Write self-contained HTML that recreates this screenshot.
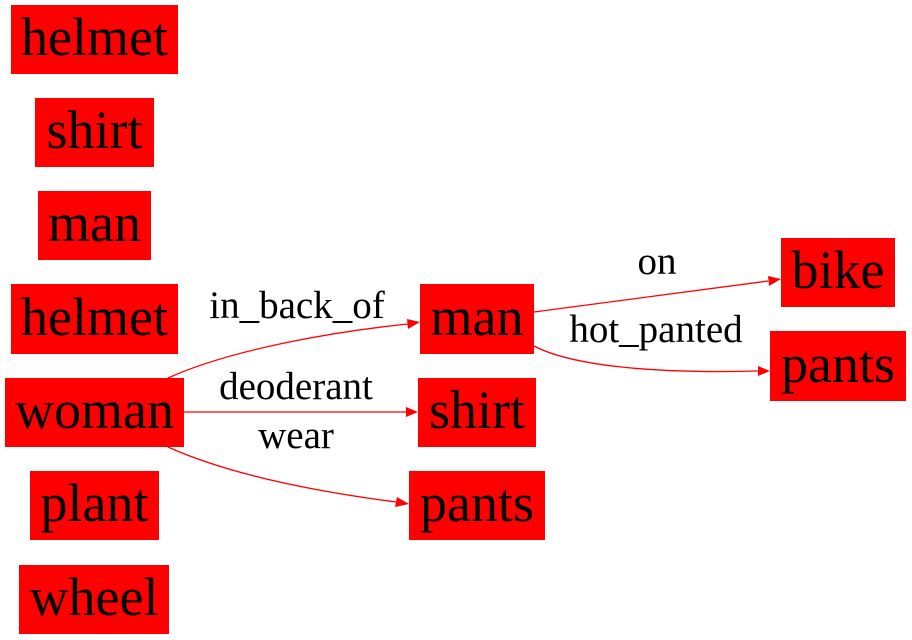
<!DOCTYPE html>
<html><head><meta charset="utf-8"><style>html,body{margin:0;padding:0;background:#fff}svg{display:block}</style></head>
<body>
<svg width="912" height="640" viewBox="0 0 912 640" xmlns="http://www.w3.org/2000/svg" font-family="Liberation Serif, serif">
<g fill="#ff0000">
<rect x="11" y="5" width="167" height="69"/>
<rect x="35" y="98" width="119" height="69"/>
<rect x="38" y="191" width="113" height="69"/>
<rect x="11" y="284" width="167" height="70"/>
<rect x="5" y="378" width="179" height="69"/>
<rect x="30" y="471" width="129" height="69"/>
<rect x="19" y="565" width="150" height="69"/>
<rect x="420" y="284" width="114" height="70"/>
<rect x="418" y="378" width="118" height="69"/>
<rect x="409" y="471" width="136" height="69"/>
<rect x="781" y="238" width="114" height="69"/>
<rect x="770" y="331" width="136" height="70"/>
</g>
<g font-size="54" text-anchor="middle" fill="#000">
<text x="94.5" y="55">helmet</text>
<text x="94.5" y="148">shirt</text>
<text x="94.5" y="241">man</text>
<text x="94.5" y="335">helmet</text>
<text x="94.5" y="428">woman</text>
<text x="94.5" y="521">plant</text>
<text x="94" y="615">wheel</text>
<text x="477" y="335">man</text>
<text x="477" y="428">shirt</text>
<text x="477" y="521">pants</text>
<text x="838" y="288">bike</text>
<text x="838" y="382">pants</text>
</g>
<g fill="none" stroke="#ff0000" stroke-width="1.3">
<path d="M168,378 C230,350 330,332 408,324"/>
<path d="M184,412 L406,412"/>
<path d="M168,447 C230,475 320,492 396,502"/>
<path d="M534,312 L768,281"/>
<path d="M534,346 C570,365 650,374 758,371"/>
</g>
<g fill="#ff0000">
<polygon points="420,322 407,319 408,329"/>
<polygon points="418,412 406,407 406,417"/>
<polygon points="409,504 397,497 395,507"/>
<polygon points="781,279 768,276 769,286"/>
<polygon points="770,371 758,366 758,376"/>
</g>
<g font-size="39" text-anchor="middle" fill="#000">
<text x="297" y="318">in_back_of</text>
<text x="296" y="399">deoderant</text>
<text x="296" y="448">wear</text>
<text x="657" y="274">on</text>
<text x="656" y="342">hot_panted</text>
</g>
</svg>
</body></html>
